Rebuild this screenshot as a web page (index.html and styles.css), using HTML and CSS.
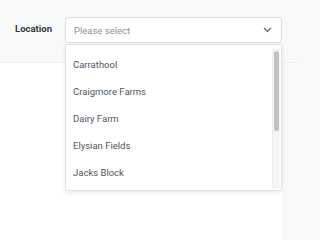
FILE: index.html
```html
<!DOCTYPE html>
<html>
<head>
<meta charset="utf-8">
<link rel="stylesheet" href="styles.css">
</head>
<body>
<div class="page">
  <div class="header">
    <label class="label">Location</label>
    <div class="field">
      <div class="select">
        <span class="placeholder">Please select</span>
        <svg class="chev" width="9" height="6" viewBox="0 0 9 6"><path d="M1 1l3.5 3.5L8 1" fill="none" stroke="#56636d" stroke-width="1.2"/></svg>
      </div>
      <div class="menu">
        <ul class="list">
          <li>Carrathool</li>
          <li>Craigmore Farms</li>
          <li>Dairy Farm</li>
          <li>Elysian Fields</li>
          <li>Jacks Block</li>
        </ul>
        <div class="track"><div class="thumb"></div></div>
      </div>
    </div>
  </div>
  <div class="content"></div>
</div>
</body>
</html>
```

FILE: styles.css
```css
html, body {
  margin: 0;
  padding: 0;
  min-height: 100%;
  background: #f8f9f9;
  font-family: Roboto, "Liberation Sans", sans-serif;
}
.page {
  display: flex;
  flex-direction: column;
  width: 300px;
  min-height: 100vh;
}
.header {
  height: 63px;
  border-bottom: 1px solid #eef0f1;
  display: flex;
  align-items: flex-start;
  padding-top: 17px;
  box-sizing: border-box;
  background: #f8f9f9;
  position: relative;
  z-index: 2;
}
.label {
  font-size: 9.5px;
  font-weight: 700;
  color: #333b42;
  margin-left: 15px;
  width: 50px;
  line-height: 24px;
}
.field {
  position: relative;
  width: 217px;
}
.select {
  height: 26px;
  box-sizing: border-box;
  border: 1px solid #d6dce0;
  border-radius: 3px;
  background: #fff;
  display: flex;
  align-items: center;
  padding: 0 9px 0 8px;
  justify-content: space-between;
}
.placeholder {
  font-size: 9.5px;
  color: #8b939a;
}
.chev {
  display: block;
}
.menu {
  position: absolute;
  left: 0;
  top: 27px;
  width: 217px;
  height: 147px;
  box-sizing: border-box;
  background: #fff;
  border: 1px solid #dfe3e6;
  border-radius: 0 0 3px 3px;
  box-shadow: 0 2px 4px rgba(0,0,0,0.08);
  display: flex;
}
.list {
  list-style: none;
  margin: 0;
  padding: 6px 0 0 0;
  flex: 1;
}
.list li {
  height: 27px;
  line-height: 27px;
  font-size: 9.5px;
  color: #4c5862;
  padding-left: 7px;
}
.track {
  width: 8px;
  margin: 4px 1px 2px 0;
  background: #f4f4f5;
  border-left: 1px solid #ebedee;
  padding: 2px 1px;
  box-sizing: border-box;
}
.thumb {
  height: 80px;
  background: #c2c2c2;
  border-radius: 3px;
}
.content {
  flex: 1;
  background: #fff;
  margin-right: 18px;
}
```
